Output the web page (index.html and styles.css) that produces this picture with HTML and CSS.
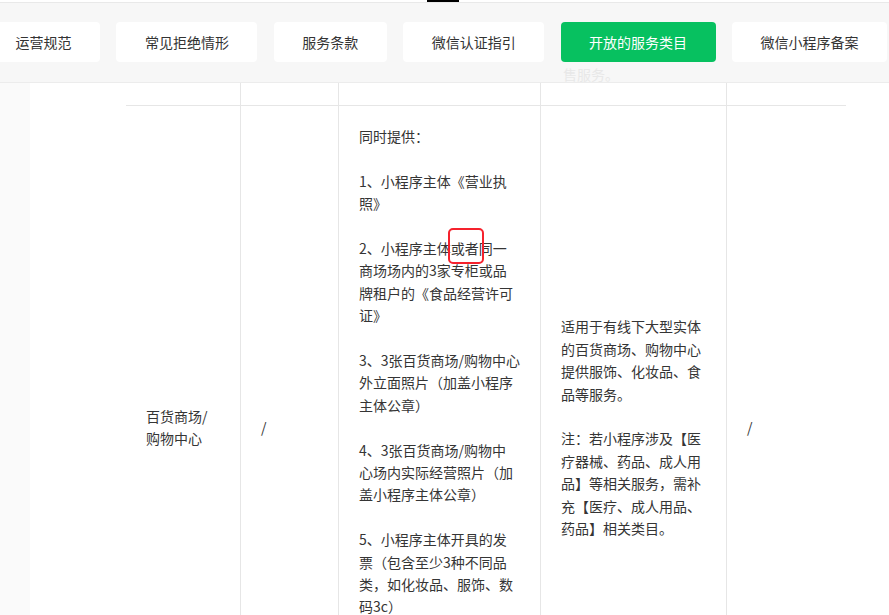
FILE: index.html
```html
<!DOCTYPE html>
<html lang="zh-CN">
<head>
    <meta charset="UTF-8">
    <meta name="viewport" content="width=device-width, initial-scale=1.0">
    <title>开放的服务类目</title>
    <link rel="stylesheet" href="styles.css">
</head>
<body>
    <div class="top-strip">
        <span class="scroll-thumb"></span>
    </div>

    <div class="tab-bar">
        <nav class="tabs">
            <a class="tab">运营规范</a>
            <a class="tab">常见拒绝情形</a>
            <a class="tab">服务条款</a>
            <a class="tab">微信认证指引</a>
            <a class="tab active">开放的服务类目</a>
            <a class="tab">微信小程序备案</a>
        </nav>
        <span class="ghost-text">售服务。</span>
    </div>

    <div class="page">
        <aside class="side"></aside>
        <main class="main">
            <table class="category-table">
                <colgroup>
                    <col class="col-name">
                    <col class="col-sub">
                    <col class="col-docs">
                    <col class="col-desc">
                    <col class="col-extra">
                </colgroup>
                <tr class="row-tail">
                    <td></td>
                    <td></td>
                    <td></td>
                    <td></td>
                    <td></td>
                </tr>
                <tr class="row-main">
                    <td>百货商场/购物中心</td>
                    <td>/</td>
                    <td class="docs">
                        <p>同时提供：</p>
                        <p>1、小程序主体《营业执<br>照》</p>
                        <p>2、小程序主体<span class="mark">或者</span>同一<br>商场场内的3家专柜或品<br>牌租户的《食品经营许可<br>证》</p>
                        <p>3、3张百货商场/购物中心<br>外立面照片（加盖小程序<br>主体公章）</p>
                        <p>4、3张百货商场/购物中<br>心场内实际经营照片（加<br>盖小程序主体公章）</p>
                        <p>5、小程序主体开具的发<br>票（包含至少3种不同品<br>类，如化妆品、服饰、数<br>码3c）</p>
                        <p>6、小程序主体与商场的租<br>赁合同或产权证明等相关<br>材料（加盖小程序主体公<br>章）</p>
                    </td>
                    <td>
                        <p>适用于有线下大型实体的百货商场、购物中心提供服饰、化妆品、食品等服务。</p>
                        <p>注：若小程序涉及【医疗器械、药品、成人用品】等相关服务，需补充【医疗、成人用品、药品】相关类目。</p>
                    </td>
                    <td>/</td>
                </tr>
            </table>
        </main>
    </div>
</body>
</html>
```

FILE: styles.css
```css
:root {
    --green: #07c160;
    --text: #333333;
    --line: #e6e6e6;
    --band: #f7f7f7;
}

* {
    box-sizing: border-box;
}

body {
    margin: 0;
    font-family: "Noto Sans CJK SC", sans-serif;
    font-size: 14px;
    color: var(--text);
    background: #fff;
    overflow: hidden;
}

.top-strip {
    height: 2px;
    padding-left: 427px;
}

.scroll-thumb {
    display: block;
    width: 32px;
    height: 2px;
    background: #000;
}

.tab-bar {
    position: relative;
    background: var(--band);
    border-top: 1px solid #e9e9e9;
    border-bottom: 1px solid #ececec;
    padding: 19px 0 20px;
    overflow: hidden;
}

.tabs {
    display: flex;
    gap: 16.4px;
    margin-left: -13px;
    white-space: nowrap;
}

.tab {
    flex: none;
    height: 40px;
    padding: 0 28.5px;
    display: flex;
    align-items: center;
    background: #fff;
    border-radius: 4px;
    color: var(--text);
    cursor: pointer;
}

.tab.active {
    background: var(--green);
    color: #fff;
}

/* text of the page behind the bar shows through */
.ghost-text {
    position: absolute;
    left: 563px;
    top: 64px;
    color: #e8e8e8;
    line-height: 14px;
}

.page {
    display: flex;
    min-height: calc(100vh - 83px);
}

.side {
    width: 30px;
    flex: none;
    background: #fafafa;
}

.main {
    flex: 1;
    background: #fff;
}

.category-table {
    margin-left: 96px;
    width: 720px;
    table-layout: fixed;
    border-collapse: separate;
    border-spacing: 0;
    line-height: 22.4px;
    color: #353535;
}

.col-name { width: 115px; }
.col-sub { width: 98px; }
.col-docs { width: 202px; }
.col-desc { width: 186px; }
.col-extra { width: 119px; }

.category-table td {
    border-right: 1px solid var(--line);
    border-bottom: 1px solid var(--line);
    padding: 19px 20px 20px;
    vertical-align: middle;
}

.category-table td:last-child {
    border-right: 0;
}

.row-tail td {
    height: 23px;
    padding: 0;
}

.docs {
    white-space: nowrap;
}

.category-table p {
    margin: 0 0 22.4px;
}

.category-table p:last-child {
    margin-bottom: 0;
}

.mark {
    position: relative;
}

.mark::after {
    content: "";
    position: absolute;
    left: -3px;
    right: -5px;
    top: -10px;
    bottom: -6px;
    border: 2px solid #f5222d;
    border-radius: 5px;
}
```
